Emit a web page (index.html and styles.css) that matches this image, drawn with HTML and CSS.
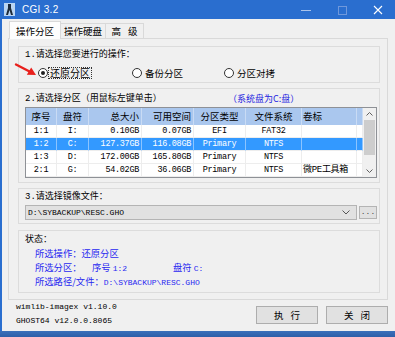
FILE: index.html
```html
<!doctype html>
<html>
<head>
<meta charset="utf-8">
<title>CGI 3.2</title>
<link rel="stylesheet" href="styles.css">
</head>
<body>
<div class="window">

  <div class="titlebar">
    <svg class="app-icon" width="11" height="13" viewBox="0 0 11 13">
      <rect x="0" y="0" width="11" height="13" fill="#b9d4f2"/>
      <path d="M4 1 L7 1 L7 5 L9 12 L7 12 L5.5 7 L4 12 L2 12 L4 5 Z" fill="#1d2a3a"/>
    </svg>
    <span class="title">CGI 3.2</span>
    <div class="controls">
      <span class="ctl"><svg width="10" height="10" viewBox="0 0 10 10"><path d="M0 5.5 H10" stroke="#a9c3ec" stroke-width="1"/></svg></span>
      <span class="ctl"><svg width="10" height="10" viewBox="0 0 10 10"><rect x="1.5" y="1.5" width="8" height="8" fill="none" stroke="#6f98dc" stroke-width="1"/></svg></span>
      <span class="ctl"><svg width="10" height="10" viewBox="0 0 10 10"><path d="M1 1 L9 9 M9 1 L1 9" stroke="#fff" stroke-width="1.1"/></svg></span>
    </div>
  </div>

  <div class="client">
    <div class="tabs">
      <div class="tab active">操作分区</div>
      <div class="tab t2">操作硬盘</div>
      <div class="tab t3">高 级</div>
    </div>

    <div class="panel">

      <!-- 1. operation -->
      <div class="group g1">
        <div class="glabel">1.请选择您要进行的操作&#xFF1A;</div>
        <div class="radios">
          <span class="radio ri1 checked"><i></i><span class="focus">还原分区</span></span>
          <span class="radio ri2"><i></i><span>备份分区</span></span>
          <span class="radio ri3"><i></i><span>分区对拷</span></span>
        </div>
      </div>

      <!-- 2. partition list -->
      <div class="group g2">
        <div class="glabel row2">
          <span class="lead">2.请选择分区&#xFF08;用鼠标左键单击&#xFF09;</span>
          <span class="sysdisk">&#xFF08;系统盘为C:盘&#xFF09;</span>
        </div>
        <div class="listview">
          <div class="lv-body">
            <div class="lv-row lv-head">
              <span class="c">序号</span>
              <span class="c">盘符</span>
              <span class="r">总大小</span>
              <span class="r">可用空间</span>
              <span class="c">分区类型</span>
              <span class="c">文件系统</span>
              <span class="l">卷标</span>
              <span></span>
            </div>
            <div class="lv-row">
              <span class="c">1:1</span><span class="c">I:</span><span class="r">0.10GB</span><span class="r">0.07GB</span>
              <span class="c">EFI</span><span class="c">FAT32</span><span class="l"></span><span></span>
            </div>
            <div class="lv-row selected">
              <span class="c">1:2</span><span class="c">C:</span><span class="r">127.37GB</span><span class="r">116.08GB</span>
              <span class="c">Primary</span><span class="c">NTFS</span><span class="l"></span><span></span>
            </div>
            <div class="lv-row">
              <span class="c">1:3</span><span class="c">D:</span><span class="r">172.00GB</span><span class="r">165.80GB</span>
              <span class="c">Primary</span><span class="c">NTFS</span><span class="l"></span><span></span>
            </div>
            <div class="lv-row">
              <span class="c">2:1</span><span class="c">G:</span><span class="r">54.02GB</span><span class="r">36.06GB</span>
              <span class="c">Primary</span><span class="c">NTFS</span><span class="l cjk">微PE工具箱</span><span></span>
            </div>
          </div>
          <div class="scrollbar">
            <span class="sb-btn"><svg width="7" height="4" viewBox="0 0 7 4"><path d="M0.5 3.5 L3.5 0.5 L6.5 3.5" fill="none" stroke="#606060"/></svg></span>
            <span class="sb-thumb"></span>
            <span class="sb-track"></span>
            <span class="sb-btn"><svg width="7" height="4" viewBox="0 0 7 4"><path d="M0.5 0.5 L3.5 3.5 L6.5 0.5" fill="none" stroke="#606060"/></svg></span>
          </div>
        </div>
      </div>

      <!-- 3. image file -->
      <div class="group g3">
        <div class="glabel">3.请选择镜像文件&#xFF1A;</div>
        <div class="file-row">
          <div class="combo">
            <span class="combo-text">D:\SYBACKUP\RESC.GHO</span>
            <svg width="8" height="5" viewBox="0 0 8 5"><path d="M0.5 0.5 L4 4 L7.5 0.5" fill="none" stroke="#555"/></svg>
          </div>
          <div class="browse">...</div>
        </div>
      </div>

      <!-- status -->
      <div class="group g4">
        <div class="glabel">状态&#xFF1A;</div>
        <div class="status">
          <div>所选操作&#xFF1A;还原分区</div>
          <div><span class="k1">所选分区&#xFF1A;</span><span class="k2">序号 <span class="mono">1:2</span></span><span>盘符 <span class="mono">C:</span></span></div>
          <div>所选路径/文件&#xFF1A;<span class="mono">D:\SYBACKUP\RESC.GHO</span></div>
        </div>
      </div>

    </div>

    <div class="footer">
      <div class="versions">
        <div>wimlib-imagex v1.10.0</div>
        <div>GHOST64 v12.0.0.8065</div>
      </div>
      <div class="buttons">
        <div class="btn">执 行</div>
        <div class="btn">关 闭</div>
      </div>
    </div>
  </div>

  <div class="taskbar"></div>

  <svg class="arrow" width="24" height="16" viewBox="0 0 24 16">
    <path d="M2 3.5 L15.5 10.5" stroke="#e8201c" stroke-width="2.4" stroke-linecap="round"/>
    <polygon points="22,14 12.8,13.8 17.2,6.4" fill="#e8201c"/>
  </svg>
</div>
</body>
</html>
```

FILE: styles.css
```css
/*
  CGI 3.2 window, drawn at the size of the screenshot
*/

body {
  margin: 0;
  background: #f0f0f0;
  font-family: "Noto Sans CJK SC", sans-serif;
  font-size: 9px;
  color: #000;
}

.window {
  position: relative;
  width: 395px;
  height: 337px;
  overflow: hidden;
  display: flex;
  flex-direction: column;
  background: #f0f0f0;
}

/* title bar */
.titlebar {
  height: 19px;
  flex: none;
  display: flex;
  align-items: center;
  background: #2a6ecf;
  color: #fff;
}

.app-icon {
  margin-left: 4px;
}

.title {
  margin-left: 7px;
  font-family: "Liberation Sans", sans-serif;
  font-size: 10px;
  letter-spacing: 0.3px;
}

.controls {
  margin-left: auto;
  display: flex;
}

.ctl {
  width: 36px;
  height: 19px;
  display: flex;
  align-items: center;
  justify-content: center;
}

.ctl:last-child {
  width: 35px;
}

/* client area */
.client {
  flex: 1;
  display: flex;
  flex-direction: column;
  border-left: 2px solid #2a6ecf;
  padding: 2px 7px 0 6px;
}

.tabs {
  height: 17px;
  display: flex;
  align-items: flex-end;
  margin-left: 1px;
}

.tab {
  height: 15px;
  box-sizing: border-box;
  border: 1px solid #d9d9d9;
  border-bottom: none;
  margin-left: -1px;
  display: flex;
  align-items: center;
  justify-content: center;
  font-size: 9.5px;
  background: #f0f0f0;
}

.tab.active {
  position: relative;
  z-index: 1;
  height: 18px;
  width: 52px;
  margin-bottom: -1px;
  margin-left: 0;
  background: #fdfdfd;
}

.tab.t2 { width: 46px; }
.tab.t3 { width: 39px; word-spacing: 5px; }

.panel {
  height: 262px;
  box-sizing: border-box;
  border: 1px solid #d9d9d9;
  padding: 7px 7px 6px 9px;
  display: flex;
  flex-direction: column;
}

.group {
  border: 1px solid #dcdcdc;
  box-sizing: border-box;
  padding: 2px 2px 0 6px;
}

.glabel {
  height: 12px;
  line-height: 12px;
  font-family: "Liberation Mono", "Noto Sans CJK SC", monospace;
  font-size: 9px;
  white-space: nowrap;
}

.g1 { height: 37px; margin-bottom: 5px; }
.g2 { height: 95px; margin-bottom: 5px; padding-top: 4px; }
.g3 { height: 36px; margin-bottom: 6px; }
.g4 { height: 63px; padding-top: 3px; }

/* radios */
.radios {
  margin-top: 6px;
  height: 12px;
  display: flex;
  align-items: center;
  padding-left: 13px;
  font-size: 9.5px;
}

.radio {
  display: flex;
  align-items: center;
  gap: 3px;
}

.radio i {
  width: 10px;
  height: 10px;
  box-sizing: border-box;
  border: 1px solid #333;
  border-radius: 50%;
  background: #fff;
  display: flex;
  align-items: center;
  justify-content: center;
}

.radio.checked i::after {
  content: "";
  width: 4px;
  height: 4px;
  border-radius: 50%;
  background: #222;
}

.ri1 { width: 94px; gap: 0; }
.ri2 { width: 92px; }

.focus {
  border: 1px dotted #333;
  padding: 0 1px;
  line-height: 10px;
  font-size: 10px;
}

/* partition list */
.row2 {
  display: flex;
}

.lead {
  width: 203px;
}

.sysdisk {
  font-family: "Noto Sans CJK SC", sans-serif;
  color: #2424e0;
}

.listview {
  margin-top: 2px;
  width: 352px;
  height: 71px;
  box-sizing: border-box;
  border: 1px solid #8e9196;
  display: flex;
  background: #fff;
}

.lv-body {
  width: 337px;
}

.lv-row {
  display: grid;
  grid-template-columns: 31px 32px 53px 52px 52px 56px 55px 6px;
  height: 13px;
  font-family: "Liberation Mono", "Noto Sans CJK SC", monospace;
  font-size: 8.5px;
  letter-spacing: -0.3px;
}

.lv-row span {
  box-sizing: border-box;
  border-right: 1px solid #ededed;
  border-bottom: 1px solid #ededed;
  line-height: 12px;
  white-space: nowrap;
  overflow: hidden;
}

.lv-row .c { text-align: center; }
.lv-row .r { text-align: right; padding-right: 2px; }
.lv-row .l { text-align: left; padding-left: 1px; }

.lv-row .cjk {
  font-size: 9px;
  letter-spacing: -0.3px;
}

.lv-head {
  height: 17px;
  background: #aac7ee;
  font-family: "Noto Sans CJK SC", sans-serif;
  font-size: 9.5px;
  letter-spacing: 0;
}

.lv-head span {
  line-height: 17px;
  border-bottom: none;
  border-right-color: #c9dbf4;
}

.lv-row.selected {
  background: #3399ff;
  color: #fff;
}

.lv-row.selected span {
  border-right-color: #8cc4ff;
}

.scrollbar {
  width: 13px;
  display: flex;
  flex-direction: column;
  background: #f0f0f0;
}

.sb-btn {
  height: 12px;
  display: flex;
  align-items: center;
  justify-content: center;
}

.sb-thumb {
  height: 35px;
  margin: 0 1px;
  background: #cdcdcd;
}

.sb-track {
  flex: 1;
}

/* image file */
.file-row {
  margin-top: 2px;
  display: flex;
  align-items: center;
  gap: 2px;
}

.combo {
  width: 332px;
  height: 15px;
  box-sizing: border-box;
  border: 1px solid #b4b4b4;
  background: #e1e1e1;
  display: flex;
  align-items: center;
  justify-content: space-between;
  padding: 0 6px 0 2px;
}

.combo-text {
  font-family: "Liberation Mono", monospace;
  font-size: 8px;
}

.browse {
  width: 18px;
  height: 13px;
  box-sizing: border-box;
  border: 1px solid #b4b4b4;
  background: #e1e1e1;
  text-align: center;
  line-height: 10px;
  font-family: "Liberation Mono", monospace;
  font-size: 8px;
  color: #444;
}

/* status */
.status {
  padding-left: 10px;
  color: #2828f0;
  font-size: 9.3px;
}

.status div {
  height: 14px;
  line-height: 14px;
  white-space: nowrap;
}

.status .mono {
  font-family: "Liberation Mono", monospace;
  font-size: 8px;
}

.k1 {
  display: inline-block;
  width: 57px;
}

.k2 {
  display: inline-block;
  width: 81px;
}

/* footer */
.footer {
  height: 31px;
  display: flex;
  justify-content: space-between;
  padding-left: 8px;
}

.versions {
  font-family: "Liberation Mono", monospace;
  font-size: 8px;
  color: #000;
}

.versions div {
  height: 14px;
  line-height: 14px;
}

.buttons {
  display: flex;
  gap: 8px;
  margin-top: 6px;
}

.btn {
  width: 62px;
  height: 18px;
  box-sizing: border-box;
  border: 1px solid #adadad;
  background: #e1e1e1;
  display: flex;
  align-items: center;
  justify-content: center;
  font-size: 9.5px;
  word-spacing: 5px;
}

.taskbar {
  height: 6px;
  flex: none;
  background: linear-gradient(#3a70bb, #2d5fa8);
}

/* red pointer drawn over the first radio */
.arrow {
  position: absolute;
  left: 14px;
  top: 61px;
}
```
